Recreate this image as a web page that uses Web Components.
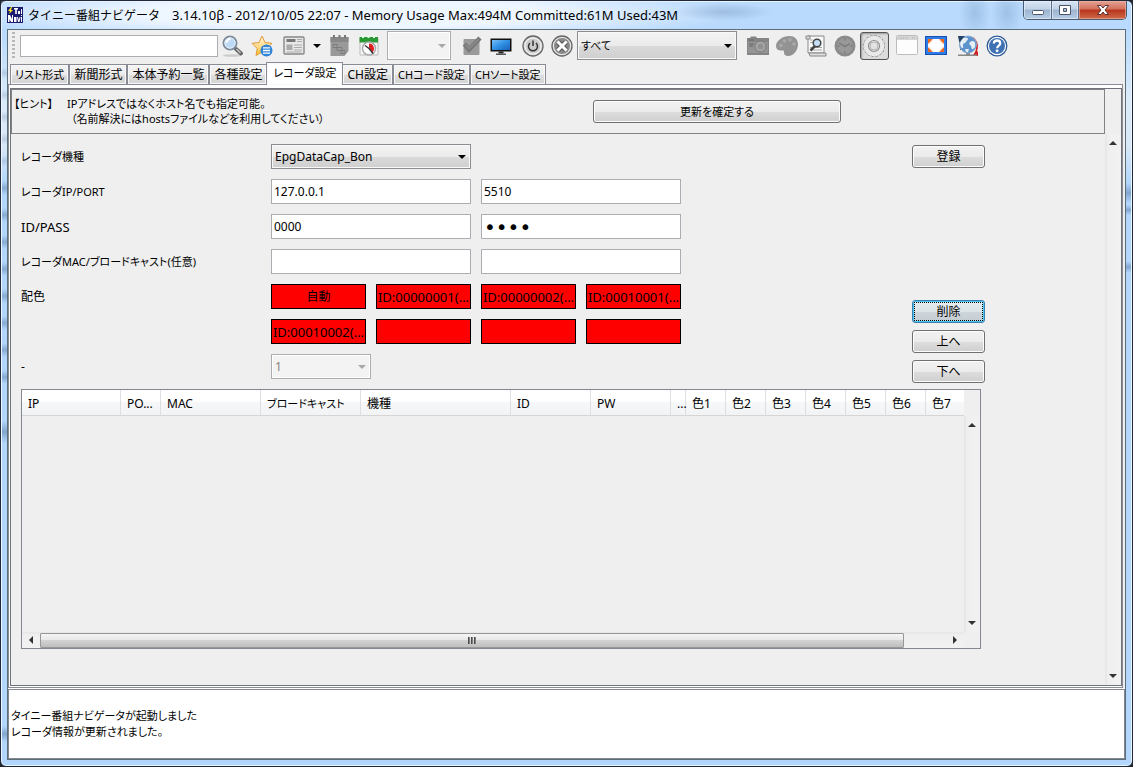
<!DOCTYPE html>
<html lang="ja">
<head>
<meta charset="utf-8">
<title>タイニー番組ナビゲータ</title>
<style>
  html { height: 100%; background: #20242c; }
  body {
    margin: 0; min-height: 100%; display: flex; flex-direction: column;
    font: 12px/16px "Noto Sans", "Noto Sans CJK JP", sans-serif;
    font-feature-settings: "palt"; color: #000;
  }
  tn-window { flex: 1; }
  .version { font-size: 13px; }
</style>
</head>
<body>
<tn-window>
  <span slot="title">タイニー番組ナビゲータ　<span class="version">3.14.10β - 2012/10/05 22:07 - Memory Usage Max:494M Committed:61M Used:43M</span></span>
  <tn-toolbar></tn-toolbar>
  <tn-tabs labels="リスト形式,新聞形式,本体予約一覧,各種設定,レコーダ設定,CH設定,CHコード設定,CHソート設定" selected="4">
    <tn-hint>
      <span slot="head">【ヒント】</span>
      <span slot="line1">IPアドレスではなくホスト名でも指定可能。</span>
      <span slot="line2">（名前解決にはhostsファイルなどを利用してください）</span>
      <tn-button slot="action">更新を確定する</tn-button>
    </tn-hint>
    <tn-scroll-pane>
      <tn-recorder-form></tn-recorder-form>
      <tn-recorder-table></tn-recorder-table>
    </tn-scroll-pane>
  </tn-tabs>
  <tn-log>
    <p>タイニー番組ナビゲータが起動しました</p>
    <p>レコーダ情報が更新されました。</p>
  </tn-log>
</tn-window>

<script>
const controlCss = `
  * { box-sizing: border-box; }
  input, select, button { font: inherit; font-feature-settings: inherit; color: #000; margin: 0; }
  input.text { display: block; width: 100%; height: 25px; border: 1px solid #abadb3; background: #fff; padding: 0 2px; outline: none; }
  .combo { position: relative; display: block; }
  .combo select { appearance: none; display: block; width: 100%; height: 25px; padding: 0 20px 0 3px; outline: none; border-radius: 0;
    border: 1px solid #8c8c92; background: linear-gradient(#f3f3f3, #ebebeb 50%, #dadada 51%, #cfcfcf); box-shadow: inset 0 0 0 1px #f8f8f8; }
  .combo::after { content: ""; position: absolute; right: 5px; top: 50%; margin-top: -2px; border: 4px solid transparent; border-top-color: #000; border-bottom: 0; pointer-events: none; }
  .combo.off select { background: #f3f3f3; border-color: #abadb3; color: #8a8078; opacity: 1; box-shadow: inset 0 0 0 1px #fff; }
  .combo.off::after { border-top-color: #a8a8a8; }
`;

const kanaClass = text => /[\u30a1-\u30fa]/.test(text) ? 'kana' : '';

function define(name, html, setup) {
  const template = document.createElement('template');
  template.innerHTML = html;
  customElements.define(name, class extends HTMLElement {
    constructor() {
      super();
      this.attachShadow({ mode: 'open' }).append(template.content.cloneNode(true));
    }
    connectedCallback() { if (setup) setup(this, this.shadowRoot); }
  });
}

/* Glass window frame with caption buttons */
define('tn-window', `
<style>
  * { box-sizing: border-box; }
  :host { box-sizing: border-box; display: flex; flex-direction: column; border: 1px solid #20283a; border-radius: 6px; padding: 0 6px 6px;
    box-shadow: inset 0 0 0 1px #eaf5ff;
    background:
      repeating-linear-gradient(transparent 0 8px, #5f83ad88 15px, transparent 22px 27px) 1px 172px / 5px 210px no-repeat,
      repeating-linear-gradient(transparent 0 6px, #7f98b855 12px, transparent 18px 22px) 1px 60px / 5px 110px no-repeat,
      linear-gradient(transparent, #5f83ad99, transparent) 1px 420px / 5px 22px no-repeat,
      linear-gradient(transparent, #5f83ad99, transparent) 1px 725px / 5px 16px no-repeat,
      linear-gradient(transparent, #5f83ad99, transparent) 100% 182px / 6px 20px no-repeat,
      linear-gradient(transparent, #5f83ad99, transparent) 100% 204px / 6px 10px no-repeat,
      linear-gradient(transparent, #5f83ad99, transparent) 100% 260px / 6px 12px no-repeat,
      linear-gradient(#b9dafc 0 30px, #dcebfa 100px, #d9e8f7 145px, #b3d7fc 180px, #b3d7fc); }
  header { height: 28px; display: flex; justify-content: space-between; align-items: flex-start; margin: 0 -6px; padding: 0 5px 0 6px;
    background:
      radial-gradient(ellipse 50px 9px at 722px 11px, #6f8fb866, transparent),
      radial-gradient(ellipse 16px 24px at 974px 12px, #7fa4cc77, transparent),
      radial-gradient(ellipse 16px 24px at 1006px 12px, #7fa4cc77, transparent),
      radial-gradient(ellipse 400px 30px at 340px 12px, #eef6ff 50%, #dcecff99 80%, transparent); }
  .title { display: flex; align-items: center; gap: 5px; height: 28px; white-space: pre; font-feature-settings: normal; }
  .buttons { display: flex; height: 19px; border: 1px solid #4a5a70; border-top: 0; border-radius: 0 0 5px 5px; overflow: hidden; }
  .buttons button { border: 0; border-right: 1px solid #5d6f88; padding: 0; width: 28px; display: grid; place-items: center;
    background: linear-gradient(#d8e6f5, #c0d2e6 45%, #9db4cf 50%, #b7cde6); box-shadow: inset 0 0 0 1px #e8f2fc99; }
  .buttons button.max { width: 27px; }
  .buttons button.close { width: 47px; border: 0; background: linear-gradient(#e4a294, #d3705c 45%, #b8341c 50%, #cf6a48); box-shadow: inset 0 0 0 1px #f0b8a899; }
  main { flex: 1; display: flex; flex-direction: column; border: 1px solid #5a6e7a; background: #efefef; min-width: 0; }
</style>
<header>
  <div class="title">
    <svg width="16" height="16" viewBox="0 0 16 16" aria-hidden="true"><rect width="16" height="16" fill="#1a1a6e"/><path d="M4 0 1 4h2L2 7l4-4H4l1-3z" fill="#ffee20"/><path d="M7 1h4v1.500H9.800V7H8.200V2.500H7zM11 4h2v3h-2zM14 2h1v5h-1zM1 8h2l2 4V8h1v7H4L2.500 12v3H1zM7 10h2.500v5H7zM10 10h1l.8 3 .8-3h1L12.500 15h-1.500zM14 8h1v1h-1zM14 10h1v5h-1z" fill="#fff"/></svg>
    <slot name="title"></slot>
  </div>
  <div class="buttons">
    <button aria-label="最小化"><svg width="14" height="12"><rect x="1.500" y="6.500" width="11" height="4" rx="1" fill="#fff" stroke="#4a556a"/></svg></button>
    <button class="max" aria-label="元に戻す"><svg width="14" height="12"><path d="M1.500 1.500h11v9h-11zM5.500 4.500v3h3v-3z" fill="#fff" stroke="#4a556a" fill-rule="evenodd"/></svg></button>
    <button class="close" aria-label="閉じる"><svg width="14" height="12"><path d="M1.500 1.500h3.500l2 2.500 2-2.500h3.500L9 6l3.500 4.500H9L7 8l-2 2.500H1.500L5 6z" fill="#fff" stroke="#5a3030"/></svg></button>
  </div>
</header>
<main><slot></slot></main>
`);

const icons = {
  search: `<ellipse cx="10" cy="20.500" rx="9" ry="1.300" fill="#ccc"/><path d="m14 14 5 4.500" stroke="#666" stroke-width="4" stroke-linecap="round"/><path d="m14.500 14 4 4" stroke="#c8c8c8" stroke-width="1.500"/><circle cx="8" cy="8" r="6.500" fill="#bcd9f5" stroke="#7f8b9c" stroke-width="2"/><circle cx="8" cy="8" r="5.200" fill="none" stroke="#e8f3ff"/><path d="M4.500 8a4 4 0 0 1 4-4" stroke="#fff" stroke-width="1.800" fill="none"/>`,
  star: `<defs><linearGradient id="sg" x2="0" y2="1"><stop stop-color="#fff6dc"/><stop offset=".6" stop-color="#fcd880"/><stop offset="1" stop-color="#f5b920"/></linearGradient></defs><path d="m11 1 3 6.500 7 .8-5.200 5 1.400 7L11 17l-6 3.500 1.200-7L1 8.300l7-.8z" fill="url(#sg)" stroke="#e09a3c" stroke-linejoin="round"/><circle cx="15.500" cy="15.500" r="6" fill="#2f86d8"/><path d="M12 12.800h7M12 15.500h7M12 18.200h7" stroke="#fff" stroke-width="1.300"/>`,
  news: `<rect x="1" y="2" width="20" height="17" rx="1" fill="#e8e8e8" stroke="#888" stroke-width="1.400"/><path d="M3.500 5.500h9" stroke="#777" stroke-width="3"/><path d="M14 4.500h5M14 6.500h5M11 10h8M11 12.500h8M11 15h8M3.500 17h15" stroke="#aaa"/><path d="M3.500 9.500h6V15h-6z" fill="#aaa"/>`,
  calOff: `<path d="M1.500 2h18v14l-4 5h-14z" fill="#999"/><path d="M1.500 2h18v5h-18z" fill="#888"/><path d="M5 0v3M10.500 0v3M16 0v3" stroke="#777" stroke-width="2"/><path d="M4 9.500h4v3H4zM8 12.500h5v3H8zM12 15.500h4v3h-4z" fill="none" stroke="#7c7c7c"/>`,
  cal: `<path d="M2 3h18v17H2z" fill="#f7f7f7" stroke="#bbb"/><path d="M1.500 2h18.500v5.500H1.500z" fill="#2c9a34"/><path d="M5 0v3M10.500 0v3M16 0v3" stroke="#e8ffe8" stroke-width="2"/><circle cx="11" cy="13.500" r="6.500" fill="#fff" stroke="#aaa" stroke-width="1.500"/><path d="M11 13.500V8.500a5 5 0 0 1 3 9z" fill="#e02020"/><path d="m11 13.500-4-3M11 13.500l4 5" stroke="#333" stroke-width="1.300"/>`,
  check: `<rect x="2.500" y="4" width="16" height="16" rx="1" fill="#9a9a9a"/><path d="m3.500 9 4.500 5.500L19 3" fill="none" stroke="#777" stroke-width="4.500"/><path d="m4.500 9.500 3.500 4L18 4" fill="none" stroke="#888" stroke-width="2"/>`,
  monitor: `<defs><linearGradient id="mg" x2="1" y2="1"><stop stop-color="#76c0f8"/><stop offset=".5" stop-color="#2f8fe4"/><stop offset="1" stop-color="#1a62b8"/></linearGradient></defs><path d="M0.500 3.500h21v13h-21z" fill="#111"/><path d="M2 5h18v10H2z" fill="url(#mg)"/><path d="M8.500 16.500h5v2h-5z" fill="#222"/><path d="M6 18.500h10v1.500H6z" fill="#555"/>`,
  power: `<circle cx="11" cy="11" r="10" fill="#d8d8d8" stroke="#666" stroke-width="1.300"/><circle cx="11" cy="11" r="8" fill="#ccc" stroke="#f4f4f4"/><path d="M8 8a4.500 4.500 0 1 0 6 0M11 5.500v5.500" stroke="#333" stroke-width="1.500" fill="none"/>`,
  cancel: `<circle cx="11" cy="11" r="10" fill="#e4e4e4" stroke="#666" stroke-width="1.300"/><circle cx="11" cy="11" r="8" fill="#8a8a8a"/><path d="m7 7 8 8m0-8-8 8" stroke="#555" stroke-width="5"/><path d="m6.500 6.500 9 9m0-9-9 9" stroke="#fff" stroke-width="3"/>`,
  camera: `<path d="M0 3h3l1-1.500h5L10 3h12v17H0z" fill="#858585"/><rect x="1" y="7" width="20" height="11" fill="#949494"/><circle cx="13.500" cy="11.500" r="5.500" fill="#a8a8a8" stroke="#777"/><circle cx="13.500" cy="11.500" r="3" fill="#929292"/><path d="M2 5h5M2 9h5M2 11h4" stroke="#666"/>`,
  palette: `<path d="M14 1C6 1 0 6 0 11c0 3 2 4.500 5 4.500 3 0 3 0 3 2s1 3.500 4 3.500c6 0 10-6 10-12 0-5-4-8-8-8z" fill="#939393"/><circle cx="5" cy="10.500" r="1.800" fill="#a9a9a9"/><circle cx="8.500" cy="6" r="1.800" fill="#a9a9a9"/><circle cx="14" cy="4.800" r="1.800" fill="#a9a9a9"/><circle cx="18" cy="9" r="1.800" fill="#a9a9a9"/>`,
  scroll: `<path d="M3 1h16v17H3z" fill="#f8f8f8" stroke="#888"/><path d="M1 1h4v3H1zM4 18h17v3H5z" fill="#ddd" stroke="#888"/><path d="M5 15h12M5 12.500h12M5 5h3M5 7.500h3" stroke="#aaa"/><path d="M10 11 5.500 15.500" stroke="#444" stroke-width="2.500"/><circle cx="12" cy="8" r="3.800" fill="#c4ddf5" stroke="#444" stroke-width="1.500"/>`,
  clock: `<circle cx="11" cy="11" r="10.500" fill="#8d8d8d"/><circle cx="11" cy="11" r="8.500" fill="#989898" stroke="#868686"/><path d="m5 8 6 3.500 5-3M11 3.500v2M11 16.500v2M3.500 11h2M16.500 11h2" stroke="#777" stroke-width="1.300" fill="none"/>`,
  gear: `<circle cx="11" cy="11" r="9.500" fill="none" stroke="#8c8c8c" stroke-width="3" stroke-dasharray="2.200 1.530"/><circle cx="11" cy="11" r="9.500" fill="#e8e8e8" stroke="#f2f2f2" stroke-width="1.500" stroke-dasharray="2.200 1.530"/><circle cx="11" cy="11" r="8" fill="#e8e8e8"/><circle cx="11" cy="11" r="5.500" fill="#eee" stroke="#8e8e8e" stroke-width="1.200"/><circle cx="11" cy="11" r="4" fill="#e2e2e2" stroke="#b4b4b4"/>`,
  window: `<rect x=".5" y=".5" width="21" height="19" rx="1" fill="#fdfdfd" stroke="#bdbdbd"/><path d="M1 1h20v4H1z" fill="#d6d6d6"/><path d="M3 3h10M16 3h4" stroke="#aaa" stroke-dasharray="1 1"/>`,
  full: `<rect x=".5" y="1.500" width="21" height="18" fill="#2f7be8" stroke="#1650b0"/><path d="M4 4h14l1 1v11l-1 1H4l-1-1V5z" fill="#fff"/><path d="M3 9V4h5zM19 9V4h-5zM3 12v5h5zM19 12v5h-5z" fill="#ee6a20"/><path d="m3 9 2.500-1L8 4M19 9l-2.500-1L14 4M3 12l2.500 1L8 17M19 12l-2.500 1L14 17" fill="none" stroke="#fbd9c0" stroke-width=".8"/>`,
  globe: `<path d="M2 1 4 15" stroke="#234" stroke-width="1.500"/><path d="M16 2c5 4 6 9 4 14l1 1v4l-5-1 2-3c2-5 1-9-3-13z" fill="#d02020"/><path d="M1 19.500h19V21H1zM9 17h4v4H9z" fill="#888"/><circle cx="11" cy="9.500" r="8.500" fill="#5c93cc" stroke="#8fb0d4"/><path d="M5 4c3-2 6-1 6 0s-2 2-2 3-3 1-3 3 1 3-1 3C2 10 3 6 5 4zM13 7c2-2 5-1 5 1 1 4-1 6-3 6-1-1 0-3-2-4-1-1-1-2 0-3zM8 14h4l-1 3H9z" fill="#e6eef6"/><path d="M1 1h7L6 3 3 7z" fill="#246"/>`,
  help: `<circle cx="11" cy="11" r="9.800" fill="#fff" stroke="#2a5a98" stroke-width="1.300"/><circle cx="11" cy="11" r="8" fill="#3f72b4"/><path d="M7.800 8.500c.3-4 6.400-4 6.400 0 0 2.200-3 2.200-3 4.700" stroke="#fff" stroke-width="2.300" fill="none"/><circle cx="11.100" cy="15.800" r="1.400" fill="#fff"/>`
};

define('tn-icon', `
<style>:host { display: block; width: 22px; height: 22px; } svg { display: block; }</style>
<svg width="22" height="22" viewBox="0 0 22 22" aria-hidden="true"></svg>
`, (el, root) => { root.querySelector('svg').innerHTML = icons[el.getAttribute('name')] || ''; });

const tool = (name, label, extra = '') => `<button ${extra} aria-label="${label}"><tn-icon name="${name}"></tn-icon></button>`;

define('tn-toolbar', `
<style>
  ${controlCss}
  :host { box-sizing: border-box; display: flex; align-items: center; gap: 10px; height: 32px; padding: 0 3px 1px; }
  .group { display: flex; align-items: center; gap: 7px; flex: none; }
  .near { gap: 4px; }
  button { border: 0; background: none; padding: 0; display: block; flex: none; }
  button.on { border: 1px solid #555; border-radius: 3px; padding: 2px; height: 28px; width: 29px; background: #dcdcdc; box-shadow: inset 1px 1px 2px #999; }
  .grip { width: 3px; height: 28px; margin: 0 1px; background: repeating-linear-gradient(#b8b8b8 0 2px, transparent 2px 4px); }
  input.text { width: 198px; height: 22px; }
  .arrow { width: 10px; height: 22px; display: grid; place-items: center; }
  .arrow::before { content: ""; border: 4px solid transparent; border-top-color: #000; border-bottom: 0; }
  .combo select { height: 29px; font-size: 11px; }
  .pid { width: 64px; } .kind { width: 160px; }
</style>
<div class="group"><div class="group near"><span class="grip"></span><input class="text" type="text" aria-label="検索">${tool('search', '検索する')}</div>${tool('star', 'お気に入り')}</div>
<div class="group">${tool('news', '新聞形式')}<button class="arrow" aria-label="表示メニュー"></button>${tool('calOff', '予約', 'disabled')}${tool('cal', '現在時刻')}<span class="combo off pid"><select disabled aria-label="ページ"><option></option></select></span></div>
<div class="group">${tool('check', '一括', 'disabled')}${tool('monitor', '画面')}</div>
<div class="group">${tool('power', '電源')}<div class="group near">${tool('cancel', '中止')}<span class="combo kind"><select aria-label="レコーダ選択"><option>すべて</option></select></span></div></div>
<div class="group">${tool('camera', 'スナップショット', 'disabled')}${tool('palette', '配色', 'disabled')}${tool('scroll', 'ログ')}<div class="group near">${tool('clock', '時刻', 'disabled')}${tool('gear', '設定', 'class="on"')}</div>${tool('window', 'ウィンドウ')}${tool('full', '全画面')}</div>
<div class="group">${tool('globe', '更新確認')}${tool('help', 'ヘルプ')}</div>
`);

define('tn-tabs', `
<style>
  * { box-sizing: border-box; }
  :host { box-sizing: border-box; flex: 1; display: flex; flex-direction: column; margin-right: 2px; min-width: 0; }
  nav { display: flex; align-items: flex-end; height: 23px; padding-left: 2px; margin-bottom: -1px; position: relative; }
  button { font: inherit; font-feature-settings: inherit; color: #000; height: 20px; margin: 0 0 1px; padding: 0 4px; border: 1px solid #898c95; border-bottom: 0;
    background: linear-gradient(#f4f4f4, #ececec 50%, #dedede 51%, #d4d4d4); white-space: nowrap; box-shadow: inset 0 0 0 1px #f8f8f8; line-height: 18px; }
  .kana { font-size: 11px; }
  button.on { height: 23px; margin: 0 -1px; padding: 0 6px 2px; background: #fff; }
  section { flex: 1; display: flex; flex-direction: column; border: 1px solid #898c95; background: #fff; padding: 3px 0 1px 1px; }
  .inner { flex: 1; display: flex; flex-direction: column; border: 1px solid #70737c; background: #efefef; min-width: 0; }
</style>
<nav role="tablist"></nav>
<section role="tabpanel"><div class="inner"><slot></slot></div></section>
`, (el, root) => {
  const nav = root.querySelector('nav');
  nav.replaceChildren(...el.getAttribute('labels').split(',').map((text, i) => {
    const b = document.createElement('button');
    b.setAttribute('role', 'tab');
    b.textContent = text;
    b.className = kanaClass(text);
    if (i === Number(el.getAttribute('selected'))) b.classList.add('on');
    return b;
  }));
});

define('tn-button', `
<style>
  :host { display: block; }
  button { box-sizing: border-box; font: inherit; font-feature-settings: inherit; color: #000; display: block; width: 100%; height: 23px; padding: 0; margin: 0;
    border: 1px solid #707070; border-radius: 3px; background: linear-gradient(#f2f2f2, #ebebeb 50%, #dddddd 51%, #cfcfcf); box-shadow: inset 0 0 0 1px #fcfcfc; outline: none; }
  :host([focused]) button { position: relative; border-color: #3c7fb1; background: linear-gradient(#e6edf1, #dde4e8 50%, #ced6db 51%, #c3ccd2); box-shadow: inset 0 0 0 1px #48c8f0; }
  :host([focused]) button::after { content: ""; position: absolute; inset: 1px; border: 1px dotted #000; }
</style>
<button type="button"><slot></slot></button>
`);

define('tn-hint', `
<style>
  * { box-sizing: border-box; }
  :host { box-sizing: border-box; display: grid; grid-template-columns: minmax(0, 579fr) 248px minmax(0, 261fr); align-items: center; height: 45px; margin-right: 16px; padding: 0 2px;
    border: 1px solid #828282; font-size: 11px; line-height: 15px; }
  .text { display: grid; grid-template-columns: 53px 1fr; white-space: nowrap; padding-bottom: 2px; }
  .second { grid-column: 2; padding-left: 4px; }
</style>
<div class="text"><slot name="head"></slot><slot name="line1"></slot><div class="second"><slot name="line2"></slot></div></div>
<slot name="action"></slot>
`);

define('tn-scrollbar', `
<style>
  * { box-sizing: border-box; }
  :host { box-sizing: border-box; display: flex; flex-direction: column; justify-content: space-between; align-items: center; width: 16px; background: linear-gradient(90deg, #e4e4e4, #efefef 3px, #f2f2f2); padding: 7px 0; }
  i { border: 4px solid transparent; flex: none; }
  .a { border-bottom-color: #333; border-top: 0; } .b { border-top-color: #333; border-bottom: 0; }
  .thumb { display: none; }
  :host([horizontal]) { flex-direction: row; width: auto; height: 16px; padding: 0 7px; background: linear-gradient(#e6e6e6, #efefef 3px, #f2f2f2); }
  :host([horizontal]) .a { border: 4px solid transparent; border-right-color: #333; border-left: 0; }
  :host([horizontal]) .b { border: 4px solid transparent; border-left-color: #333; border-right: 0; }
  :host([horizontal]) .thumb { display: flex; justify-content: center; align-items: center; gap: 1px; height: 15px; flex: 1; margin: 0 49px 0 7px; border: 1px solid #979797; border-radius: 1px;
    background: linear-gradient(#f4f4f4, #e8e8e8 45%, #d2d2d2 50%, #bebebe); }
  .thumb b { width: 2px; height: 7px; background: linear-gradient(90deg, #333, #999); }
</style>
<i class="a"></i><span class="thumb"><b></b><b></b><b></b></span><i class="b"></i>
`);

define('tn-scroll-pane', `
<style>
  :host { flex: 1; display: flex; min-width: 0; }
  .view { flex: 1; display: flex; flex-direction: column; min-width: 0; padding: 10px 120px 36px 10px; }
</style>
<div class="view"><slot></slot></div>
<tn-scrollbar></tn-scrollbar>
`);

define('tn-recorder-form', `
<style>
  ${controlCss}
  :host { display: flex; justify-content: space-between; align-items: flex-start; margin-bottom: 6px; }
  form { display: grid; grid-template-columns: 240px repeat(4, 95px); grid-auto-rows: 25px; gap: 10px; align-items: center; }
  form > :is(label, .label) { grid-column: 1; margin-right: -10px; white-space: nowrap; }
  .kana { font-size: 11px; }
  .latin { font-size: 13px; }
  .wide { grid-column-end: span 2; }
  .swatch { height: 25px; border: 1px solid #000; background: #f00; padding: 0; overflow: hidden; white-space: nowrap; }
  .next { grid-column: 2; }
  .small { width: 100px; }
  input.mask { font: 20px "DejaVu Sans", sans-serif; }
  .side { display: grid; gap: 7px; width: 73px; padding-top: 1px; }
  .first { margin-bottom: 125px; }
</style>
<form>
  <label for="model" class="kana">レコーダ機種</label><span class="combo wide"><select id="model"><option>EpgDataCap_Bon</option></select></span>
  <label for="ip" class="kana">レコーダIP/PORT</label><input class="text wide" id="ip" value="127.0.0.1"><input class="text wide" aria-label="PORT" value="5510">
  <label for="user" class="latin">ID/PASS</label><input class="text wide" id="user" value="0000"><input class="text wide mask" type="password" aria-label="PASS" value="0000">
  <label for="mac" class="kana">レコーダMAC/ブロードキャスト(任意)</label><input class="text wide" id="mac"><input class="text wide" aria-label="ブロードキャスト">
  <span class="label">配色</span>
  <button type="button" class="swatch">自動</button><button type="button" class="swatch latin">ID:00000001(...</button><button type="button" class="swatch latin">ID:00000002(...</button><button type="button" class="swatch latin">ID:00010001(...</button>
  <button type="button" class="swatch latin next">ID:00010002(...</button><button type="button" class="swatch" aria-label="色5"></button><button type="button" class="swatch" aria-label="色6"></button><button type="button" class="swatch" aria-label="色7"></button>
  <label for="tuner">-</label><span class="combo off small"><select id="tuner" disabled><option>1</option></select></span>
</form>
<div class="side">
  <tn-button class="first">登録</tn-button>
  <tn-button focused>削除</tn-button>
  <tn-button>上へ</tn-button>
  <tn-button>下へ</tn-button>
</div>
`);

const columns = [['IP', 99], ['PO...', 40], ['MAC', 100], ['ブロードキャスト', 100], ['機種', 150], ['ID', 80], ['PW', 80], ['...', 15],
  ['色1', 40], ['色2', 40], ['色3', 40], ['色4', 40], ['色5', 40], ['色6', 40], ['色7', 38]];

define('tn-recorder-table', `
<style>
  * { box-sizing: border-box; }
  :host { box-sizing: border-box; flex: 1; display: grid; grid-template-columns: minmax(0, 1fr) 16px; grid-template-rows: 26px minmax(120px, 1fr) 16px; margin-right: 4px; border: 1px solid #828790; }
  .view { grid-area: 1 / 1 / 3 / 2; overflow: hidden; }
  .vertical { grid-area: 2 / 2; }
  .horizontal { grid-area: 3 / 1; }
  table { border-collapse: separate; border-spacing: 0; table-layout: fixed; width: 942px; }
  th { height: 26px; padding: 3px 0 0 6px; font-weight: normal; text-align: left; white-space: nowrap; border-right: 1px solid #dedfe1; border-bottom: 1px solid #d5d5d5;
    background: linear-gradient(#fff 45%, #f5f7f9 50%, #f1f3f5); }
  th:last-child { border-right: 0; }
  .kana { font-size: 11px; }
</style>
<div class="view"><table><colgroup></colgroup><thead><tr></tr></thead><tbody></tbody></table></div>
<tn-scrollbar class="vertical"></tn-scrollbar>
<tn-scrollbar class="horizontal" horizontal></tn-scrollbar>
`, (el, root) => {
  root.querySelector('colgroup').innerHTML = columns.map(([, w]) => `<col style="width:${w}px">`).join('');
  root.querySelector('tr').innerHTML = columns.map(([t]) => `<th scope="col" class="${kanaClass(t)}">${t}</th>`).join('');
});

define('tn-log', `
<style>
  :host { display: block; box-sizing: border-box; min-height: 70px; margin-top: 1px; padding: 18px 2px; background: #fff; border: 1px solid #828790; box-shadow: 0 -1px #fff; font-size: 11px; }
  ::slotted(p) { margin: 0; }
</style>
<slot></slot>
`);
</script>
</body>
</html>
